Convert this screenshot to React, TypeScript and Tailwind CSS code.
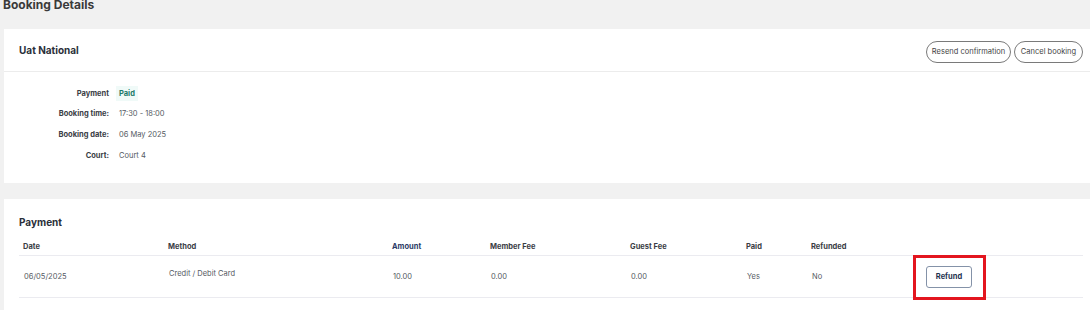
import React from "react";

const font = { fontFamily: "Inter, 'Noto Sans', sans-serif" };

export default function App() {
  return (
    <div className="w-[1090px] h-[310px] overflow-hidden bg-[#f1f1f1] flex flex-col" style={font}>
      <div className="h-[29px] pl-[3px] flex items-start shrink-0">
        <div className="relative -top-[2px] text-[12px] font-bold text-[#3a3a3a] leading-[13px]">Booking Details</div>
      </div>

      <div className="ml-[4px] bg-white h-[154px] shrink-0">
        <div className="h-[43px] border-b border-[#ececec] flex items-center justify-between pl-[15px] pr-[7px]">
          <div className="text-[10px] font-bold text-[#2b2f3a]">Uat National</div>
          <div className="flex gap-[3px] pt-[4px]">
            <button className="h-[22px] w-[85px] rounded-full border border-[#7a7a7a] text-[7.5px] text-[#444] bg-white">Resend confirmation</button>
            <button className="h-[22px] w-[69px] rounded-full border border-[#7a7a7a] text-[7.5px] text-[#444] bg-white">Cancel booking</button>
          </div>
        </div>
        <div className="pt-[11px] flex flex-col">
          {[
            ["Payment", "Paid"],
            ["Booking time:", "17:30 - 18:00"],
            ["Booking date:", "06 May 2025"],
            ["Court:", "Court 4"],
          ].map(([l, v]) => (
            <div key={l} className="flex items-center h-[20.7px]">
              <div className="w-[105px] text-right text-[7.5px] font-bold text-[#3a3d45]">{l}</div>
              {v === "Paid" ? (
                <div className="ml-[7px] px-[3px] py-[2px] bg-[#f0faf8] text-[7.5px] font-bold text-[#1d7a6a]">Paid</div>
              ) : (
                <div className="ml-[10px] text-[7.5px] text-[#555a63]">{v}</div>
              )}
            </div>
          ))}
        </div>
      </div>

      <div className="h-[16px] shrink-0" />

      <div className="ml-[4px] bg-white h-[120px] pl-[15px] pr-[7px] shrink-0">
        <div className="h-[39px] flex items-end pb-[8px]">
          <div className="text-[10px] font-bold text-[#2b2f3a]">Payment</div>
        </div>
        <div className="grid grid-cols-[145px_224px_98px_140px_116px_65px_115px_1fr] text-[7.5px]">
          {["Date", "Method", "Amount", "Member Fee", "Guest Fee", "Paid", "Refunded", ""].map((h, i) => (
            <div
              key={i}
              className={`h-[18px] border-b border-[#ebebf0] pl-[4px] flex items-center font-bold ${h === "Amount" ? "text-[#2c3b66]" : "text-[#3a3d45]"}`}
            >
              {h}
            </div>
          ))}
          {["06/05/2025", "Credit / Debit Card", "10.00", "0.00", "0.00", "Yes", "No"].map((c, i) => (
            <div key={i} className="h-[42px] border-b border-[#ebebf0] pl-[5px] flex items-center text-[#555a63]">
              <span className={i === 1 ? "-mt-[6px]" : i === 0 ? "mt-[1px]" : ""}>{c}</span>
            </div>
          ))}
          <div className="h-[42px] border-b border-[#ebebf0] pl-[4px] flex items-center">
            <div className="relative">
              <button className="h-[22px] w-[46px] rounded-[3px] border border-[#8492a8] bg-white text-[7.5px] font-bold text-[#1f3350]">Refund</button>
              <div className="absolute -left-[13px] -top-[11px] w-[73px] h-[45px] border-[3px] border-[#e3161f]" />
            </div>
          </div>
        </div>
      </div>
    </div>
  );
}
